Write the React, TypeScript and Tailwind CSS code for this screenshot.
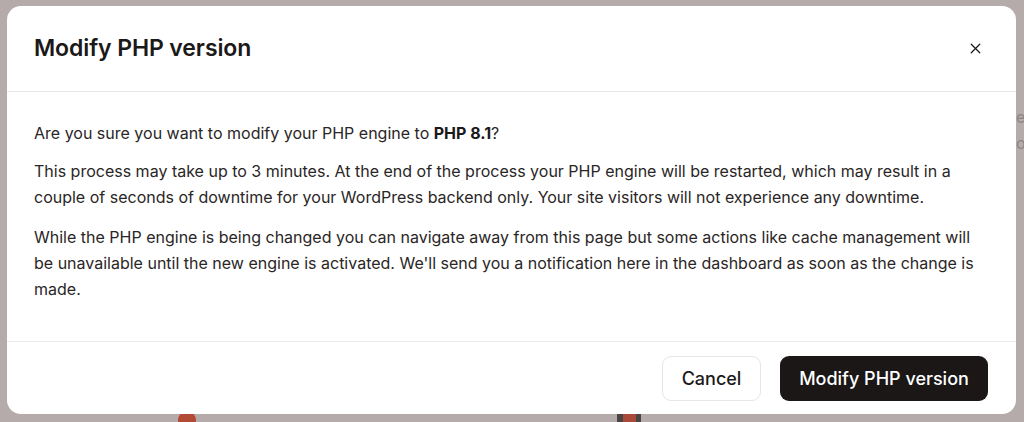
import { X } from "lucide-react";

export default function App() {
  return (
    <div
      className="relative h-[422px] w-[1024px] overflow-hidden bg-[#b6abab] pt-[6px] pb-[8px] pl-[7px] pr-[8px]"
      style={{ fontFamily: "Inter, 'Noto Sans', sans-serif" }}
    >
      {/* faint page bits showing through the backdrop */}
      <div className="absolute left-[178px] top-[412px] h-[16px] w-[18px] rounded-full bg-[#b24a34]" />
      <div className="absolute left-[617px] top-[410px] flex h-[12px] w-[24px]">
        <div className="w-[6px] bg-[#4a4444]" />
        <div className="flex-1 bg-[#a8493a]" />
        <div className="w-[5px] bg-[#4a4444]" />
      </div>
      <div className="absolute left-[1016px] top-[104px] text-[16px] leading-[26px] text-[#8d8585]">
        e<br />o
      </div>

      <div className="relative flex h-full w-full flex-col rounded-[14px] bg-white text-[#1c1919]">
        <div className="flex h-[86px] items-center justify-between border-b border-[#ece8e7] pl-[27px] pr-[29px]">
          <h2 className="text-[23px] font-semibold tracking-[-0.1px]">Modify PHP version</h2>
          <button className="flex h-[24px] w-[24px] items-center justify-center text-[#1c1919]">
            <X size={17} strokeWidth={1.8} />
          </button>
        </div>

        <div className="flex flex-1 flex-col px-[27px] pt-[28px] text-[16px] leading-[26px] text-[#2a2626]">
          <p>
            Are you sure you want to modify your PHP engine to <strong className="font-bold text-[#1c1919]">PHP 8.1</strong>?
          </p>
          <p className="mt-[12px]">
            This process may take up to 3 minutes. At the end of the process your PHP engine will be restarted, which
            may result in a couple of seconds of downtime for your WordPress backend only. Your site visitors will not
            experience any downtime.
          </p>
          <p className="mt-[14px]">
            While the PHP engine is being changed you can navigate away from this page but some actions like cache
            management will be unavailable until the new engine is activated. We'll send you a notification here in the
            dashboard as soon as the change is made.
          </p>
        </div>

        <div className="flex items-center justify-end gap-[19px] border-t border-[#ece8e7] px-[28px] pt-[14px] pb-[13px]">
          <button className="h-[45px] w-[99px] rounded-[9px] border border-[#e9e5e4] bg-white text-[18px] font-medium text-[#1c1919]">
            Cancel
          </button>
          <button className="h-[45px] w-[208px] rounded-[9px] bg-[#1b1717] text-[18px] font-medium text-white">
            Modify PHP version
          </button>
        </div>
      </div>
    </div>
  );
}
